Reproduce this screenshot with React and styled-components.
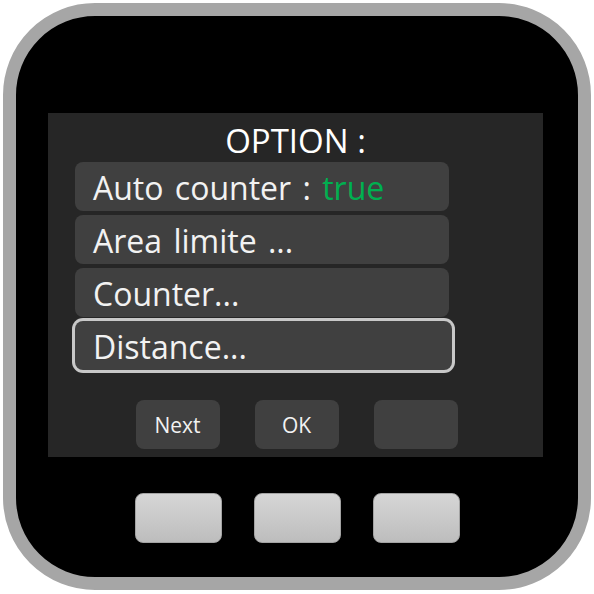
import styled, { createGlobalStyle } from 'styled-components'

const GlobalStyle = createGlobalStyle`
  html, body {
    margin: 0;
    padding: 0;
    background: #ffffff;
    font-family: "Open Sans", "Noto Sans", sans-serif;
  }
  body {
    padding: 3px;
  }
`

const Device = styled.div`
  box-sizing: border-box;
  width: 588px;
  height: 587px;
  border: 13px solid #a6a6a6;
  border-radius: 92px;
  background: #000;
  padding: 97px 0 0 32px;
  display: flex;
  flex-direction: column;
`

const Screen = styled.div`
  width: 495px;
  height: 344px;
  background: #262626;
  display: flex;
  flex-direction: column;
`

const Title = styled.div`
  height: 49px;
  display: flex;
  align-items: center;
  justify-content: center;
  color: #fff;
  font-size: 33px;
  padding-top: 6px;
  box-sizing: border-box;
`

const Menu = styled.div`
  display: flex;
  flex-direction: column;
  gap: 4px;
  margin-left: 27px;
`

const Row = styled.div`
  box-sizing: border-box;
  width: ${(p) => (p.$selected ? 377 : 374)}px;
  height: 49px;
  border-radius: 8px;
  background: #404040;
  color: #f2f2f2;
  font-size: 32px;
  word-spacing: 3px;
  display: flex;
  align-items: center;
  padding-left: 18px;
  padding-top: 2px;
  white-space: pre;
  box-shadow: ${(p) => (p.$selected ? '0 0 0 3px #c8c8c8' : 'none')};
`

const Value = styled.span`
  color: #00b050;
`

const Actions = styled.div`
  display: flex;
  justify-content: center;
  gap: 35px;
  margin-top: 30px;
  padding-left: 2px;
`

const SoftButton = styled.div`
  width: 84px;
  height: 49px;
  border-radius: 8px;
  background: #404040;
  color: #f2f2f2;
  font-size: 21px;
  display: flex;
  align-items: center;
  justify-content: center;
`

const Keys = styled.div`
  display: flex;
  gap: 32px;
  margin-top: 36px;
  margin-left: 87px;
`

const Key = styled.div`
  box-sizing: border-box;
  width: 87px;
  height: 50px;
  border-radius: 8px;
  border: 1px solid #a3a3a3;
  background: linear-gradient(#d6d6d6, #bdbdbd);
`

export default function App() {
  return (
    <>
      <GlobalStyle />
      <Device>
        <Screen>
          <Title>OPTION :</Title>
          <Menu>
            <Row>
              {'Auto counter : '}
              <Value>true</Value>
            </Row>
            <Row>Area limite ...</Row>
            <Row>Counter...</Row>
            <Row $selected>Distance...</Row>
          </Menu>
          <Actions>
            <SoftButton>Next</SoftButton>
            <SoftButton>OK</SoftButton>
            <SoftButton />
          </Actions>
        </Screen>
        <Keys>
          <Key />
          <Key />
          <Key />
        </Keys>
      </Device>
    </>
  )
}
